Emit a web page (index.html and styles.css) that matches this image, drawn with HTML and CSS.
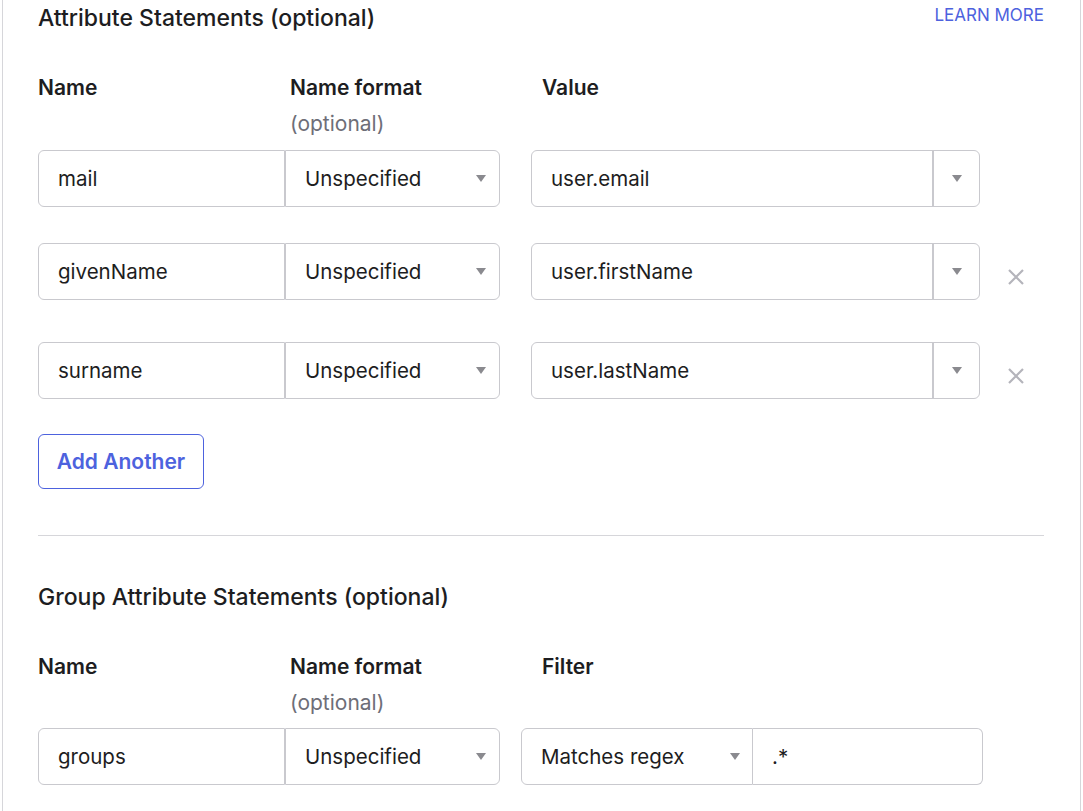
FILE: index.html
```html
<!DOCTYPE html>
<html>
<head>
<meta charset="utf-8">
<link rel="stylesheet" href="styles.css">
</head>
<body>
<div class="panel">
  <section class="block">
    <div class="title-row">
      <h2 class="title">Attribute Statements (optional)</h2>
      <a class="learn">LEARN MORE</a>
    </div>
    <div class="heads">
      <div class="head">Name</div>
      <div class="head">Name format<div class="opt">(optional)</div></div>
      <div class="head">Value</div>
    </div>
    <div class="row">
      <div class="field name">mail</div>
      <div class="field sel fmt"><span>Unspecified</span><i class="tri"></i></div>
      <div class="combo"><div class="combo-text">user.email</div><div class="combo-btn"><i class="tri"></i></div></div>
    </div>
    <div class="row extra">
      <div class="field name">givenName</div>
      <div class="field sel fmt"><span>Unspecified</span><i class="tri"></i></div>
      <div class="combo"><div class="combo-text">user.firstName</div><div class="combo-btn"><i class="tri"></i></div></div>
      <button class="remove"><svg width="18" height="18" viewBox="0 0 18 18"><path d="M2 2L16 16M16 2L2 16" stroke="#b4b4bb" stroke-width="2.2" fill="none"/></svg></button>
    </div>
    <div class="row">
      <div class="field name">surname</div>
      <div class="field sel fmt"><span>Unspecified</span><i class="tri"></i></div>
      <div class="combo"><div class="combo-text">user.lastName</div><div class="combo-btn"><i class="tri"></i></div></div>
      <button class="remove"><svg width="18" height="18" viewBox="0 0 18 18"><path d="M2 2L16 16M16 2L2 16" stroke="#b4b4bb" stroke-width="2.2" fill="none"/></svg></button>
    </div>
    <button class="add">Add Another</button>
  </section>
  <hr class="sep">
  <section class="block group">
    <div class="title-row">
      <h2 class="title">Group Attribute Statements (optional)</h2>
    </div>
    <div class="heads">
      <div class="head">Name</div>
      <div class="head">Name format<div class="opt">(optional)</div></div>
      <div class="head">Filter</div>
    </div>
    <div class="row">
      <div class="field name">groups</div>
      <div class="field sel fmt"><span>Unspecified</span><i class="tri"></i></div>
      <div class="field sel filter"><span>Matches regex</span><i class="tri"></i></div>
      <div class="field regex">.*</div>
    </div>
  </section>
</div>
</body>
</html>
```

FILE: styles.css
```css
* { box-sizing: border-box; }
html, body { margin: 0; padding: 0; background: #fff; }
body {
  font-family: Inter, "Noto Sans", "Liberation Sans", sans-serif;
  color: #1d1d21;
  height: 811px;
  overflow: hidden;
}
.panel {
  margin: 0 2px 0 2px;
  width: 1079px;
  border-left: 1px solid #d6d6da;
  border-right: 1px solid #d6d6da;
  padding: 4px 35px 40px 35px;
  min-height: 811px;
}
.title-row {
  display: flex;
  justify-content: space-between;
  align-items: flex-start;
  width: 1006px;
}
.title {
  margin: 0;
  font-size: 23px;
  font-weight: 500;
  line-height: 28px;
}
.learn {
  font-size: 17px;
  line-height: 22px;
  color: #4d62de;
  margin-top: 0;
}
.heads {
  display: grid;
  grid-template-columns: 252px 252px 1fr;
  margin-top: 42px;
}
.head {
  font-size: 21px;
  font-weight: 600;
  line-height: 28px;
}
.opt {
  font-weight: 400;
  color: #6e6e78;
  margin-top: 8px;
}
.row {
  display: flex;
  align-items: flex-start;
  margin-top: 12px;
  margin-bottom: 36px;
}
.row.extra { margin-bottom: 42px; }
.field {
  height: 57px;
  border: 1px solid #c9c9ce;
  font-size: 20.5px;
  display: flex;
  align-items: center;
  padding: 0 19px;
}
.name {
  width: 247px;
  border-radius: 6px 0 0 6px;
}
.sel {
  justify-content: space-between;
  padding-right: 13px;
}
.fmt {
  width: 215px;
  border-radius: 0 6px 6px 0;
}
.tri {
  display: block;
  width: 0;
  height: 0;
  border-left: 5px solid transparent;
  border-right: 5px solid transparent;
  border-top: 7px solid #8a8a8f;
}
.combo {
  margin-left: 31px;
  width: 449px;
  height: 57px;
  border: 1px solid #c9c9ce;
  border-radius: 6px;
  display: flex;
}
.combo-text {
  flex: 1;
  display: flex;
  align-items: center;
  padding-left: 19px;
  font-size: 20.5px;
  border-right: 2px solid #c9c9ce;
}
.combo-btn {
  width: 45px;
  display: flex;
  align-items: center;
  justify-content: center;
}
.remove {
  margin-left: 26px;
  margin-top: 24px;
  width: 20px;
  height: 20px;
  padding: 0;
  border: 0;
  background: none;
  display: flex;
  align-items: center;
  justify-content: center;
}
.add {
  display: block;
  width: 166px;
  height: 55px;
  border: 1px solid #4d62de;
  border-radius: 6px;
  background: #fff;
  color: #4d62de;
  font-family: inherit;
  font-size: 21px;
  font-weight: 600;
  padding: 0;
  margin-top: -1px;
}
.sep {
  margin: 46px 0 0 0;
  width: 1006px;
  border: 0;
  border-top: 1px solid #d6d6da;
}
.group { margin-top: 47px; }
.group .row { margin-top: 11px; }
.filter {
  margin-left: 21px;
  width: 232px;
  border-radius: 6px 0 0 6px;
  padding-right: 12px;
}
.regex {
  width: 230px;
  border-left: 0;
  border-radius: 0 6px 6px 0;
}
```
